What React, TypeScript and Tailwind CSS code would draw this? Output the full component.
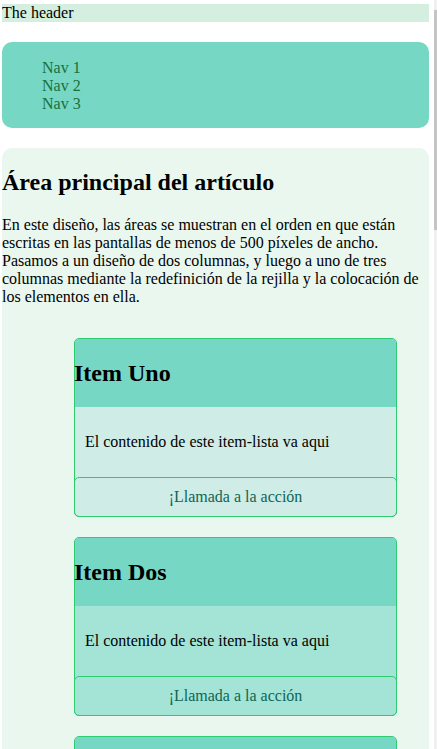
import React from "react";

const items = [
  { title: "Item Uno", body: "bg-[#d0ece7]" },
  { title: "Item Dos", body: "bg-[#a3e4d7]" },
  { title: "Item Tres", body: "bg-[#d0ece7]" },
];

function Card({ title, body }: { title: string; body: string }) {
  return (
    <li className={`mx-[32px] rounded-[5px] border border-[#2ecc71] ${body} flex flex-col`}>
      <div className="rounded-t-[4px] bg-[#76d7c4] py-[20px]">
        <h2 className="-ml-px text-[24px] font-bold leading-[28px]">{title}</h2>
      </div>
      <div className="p-[10px]">
        <p className="my-[16px] leading-[18px]">El contenido de este item-lista va aqui</p>
      </div>
      <button className="-mx-px -mb-px rounded-[5px] border border-[#2ecc71] py-[10px] text-center leading-[18px] text-[#0e6655] font-['Liberation_Serif',serif] text-[16px]">
        ¡Llamada a la acción
      </button>
    </li>
  );
}

export default function App() {
  return (
    <div className="flex h-[749px] overflow-hidden bg-white font-['Liberation_Serif',serif] text-[16px] text-black">
      <div className="w-[431px] shrink-0 px-[2px] pt-[4px]">
        <header className="h-[18px] bg-[#d4efdf] leading-[18px]">The header</header>
        <nav className="mt-[20px] rounded-[10px] bg-[#76d7c4]">
          <ul className="pt-[17px] pb-[15px] pl-[40px] leading-[18px] text-[#196f3d]">
            <li>Nav 1</li>
            <li>Nav 2</li>
            <li>Nav 3</li>
          </ul>
        </nav>
        <main className="mt-[20px] rounded-[10px] bg-[#e9f7ef] pt-[20px] pb-[20px]">
          <h2 className="text-[24px] font-bold leading-[28px]">Área principal del artículo</h2>
          <p className="mt-[20px] leading-[18px]">
            En este diseño, las áreas se muestran en el orden en que están escritas en las pantallas de menos de 500 píxeles de ancho. Pasamos a un diseño de dos columnas, y luego a uno de tres columnas mediante la redefinición de la rejilla y la colocación de los elementos en ella.
          </p>
          <ul className="mt-[32px] flex flex-col gap-[20px] pl-[40px]">
            {items.map((it) => (
              <Card key={it.title} title={it.title} body={it.body} />
            ))}
          </ul>
        </main>
      </div>
      <div className="flex w-[6px] shrink-0 justify-end">
        <div className="w-[3px] bg-[#f0f0f0]">
          <div className="mt-[10px] h-[220px] w-[3px] bg-[#c4c4c4]" />
        </div>
      </div>
    </div>
  );
}
